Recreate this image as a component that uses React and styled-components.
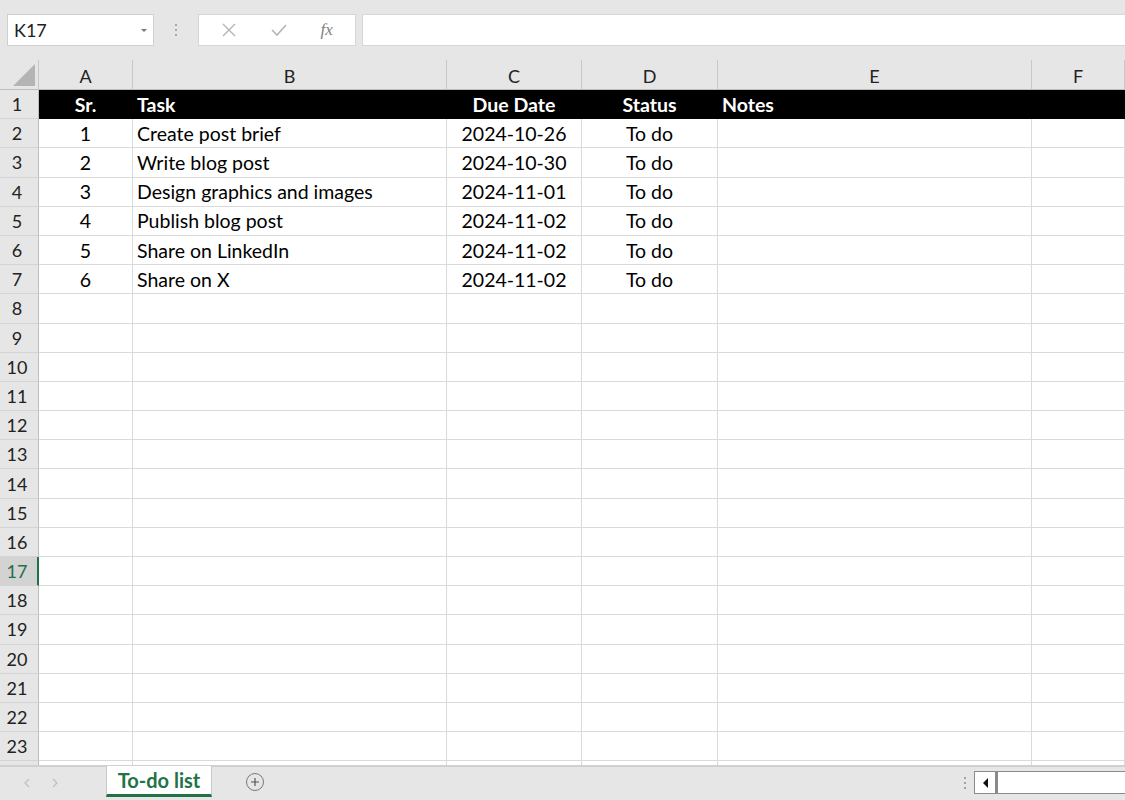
import React from 'react'
import styled, { createGlobalStyle } from 'styled-components'

const GlobalStyle = createGlobalStyle`
  html, body {
    margin: 0;
    padding: 0;
    background: #ffffff;
    overflow: hidden;
  }
  body {
    font-family: "Lato", "Noto Sans", sans-serif;
  }
`;

const Page = styled.div`
  width: 1125px;
  height: 800px;
  display: flex;
  flex-direction: column;
  overflow: hidden;
  background: #ffffff;
`;

const FormulaBar = styled.div`
  height: 60px;
  flex: none;
  background: #e6e6e6;
  display: flex;
  align-items: flex-start;
  padding: 14px 0 0 7px;
  box-sizing: border-box;
`;

const NameBox = styled.div`
  width: 147px;
  height: 32px;
  box-sizing: border-box;
  background: #fff;
  border: 1px solid #d0d0d0;
  display: flex;
  align-items: center;
  justify-content: space-between;
  padding: 0 6px 0 6px;
  font-size: 18px;
  color: #222;
`;

const Caret = styled.span`
  width: 0;
  height: 0;
  border-left: 3px solid transparent;
  border-right: 3px solid transparent;
  border-top: 3px solid #777;
`;

const Grip = styled.div`
  width: 44px;
  height: 32px;
  display: flex;
  flex-direction: column;
  align-items: center;
  justify-content: center;
  gap: 3px;
  span {
    width: 2px;
    height: 2px;
    background: #a8a8a8;
  }
`;

const FxButtons = styled.div`
  width: 158px;
  height: 32px;
  box-sizing: border-box;
  background: #fff;
  border: 1px solid #d6d6d6;
  display: flex;
  align-items: center;
  justify-content: space-around;
  padding: 0 6px;
`;

const Fx = styled.span`
  font-family: "Liberation Serif", serif;
  font-style: italic;
  font-size: 17px;
  color: #808080;
`;

const FormulaInput = styled.div`
  flex: 1;
  height: 32px;
  margin-left: 6px;
  background: #fff;
  border: 1px solid #d6d6d6;
  border-right: none;
  box-sizing: border-box;
`;

const Sheet = styled.div`
  flex: 1;
  overflow: hidden;
  display: grid;
  grid-template-columns: 39px 94px 314px 135px 136px 314px 1fr;
  grid-template-rows: 30px;
  grid-auto-rows: 29.2px;
  align-content: start;
`;

const Corner = styled.div`
  background: #e6e6e6;
  border-right: 1px solid #c8c8c8;
  border-bottom: 1px solid #bdbdbd;
  position: relative;
  overflow: hidden;
  &::after {
    content: '';
    position: absolute;
    right: 3px;
    bottom: 3px;
    border-left: 22px solid transparent;
    border-bottom: 22px solid #b4b4b4;
  }
`;

const ColHead = styled.div`
  background: #e6e6e6;
  border-right: 1px solid #c8c8c8;
  border-bottom: 1px solid #bdbdbd;
  display: flex;
  align-items: center;
  justify-content: center;
  font-size: 18px;
  color: #222;
  box-sizing: border-box;
  padding-top: 2px;
`;

const RowHead = styled.div`
  background: ${p => (p.$selected ? '#d3d3d3' : '#e6e6e6')};
  color: ${p => (p.$selected ? '#217346' : '#222')};
  border-right: ${p => (p.$selected ? '2px solid #217346' : '1px solid #bdbdbd')};
  border-bottom: 1px solid #d4d4d4;
  display: flex;
  align-items: center;
  justify-content: center;
  font-size: 18px;
  box-sizing: border-box;
  padding-right: ${p => (p.$selected ? '3px' : '4px')};
`;

const Cell = styled.div`
  box-sizing: border-box;
  border-right: 1px solid ${p => (p.$dark ? '#000' : '#dadada')};
  border-bottom: 1px solid ${p => (p.$dark ? '#000' : '#dadada')};
  background: ${p => (p.$dark ? '#000' : '#fff')};
  color: ${p => (p.$dark ? '#fff' : '#000')};
  font-weight: ${p => (p.$dark ? 700 : 400)};
  font-size: 19.5px;
  display: flex;
  align-items: center;
  justify-content: ${p => (p.$align === 'center' ? 'center' : 'flex-start')};
  padding: 0 4px;
  white-space: nowrap;
  overflow: hidden;
`;

const BottomBar = styled.div`
  height: 35px;
  flex: none;
  background: #e6e6e6;
  border-top: 2px solid #d0d0d0;
  box-sizing: border-box;
  display: flex;
  align-items: flex-start;
`;

const NavArrows = styled.div`
  width: 106px;
  height: 31px;
  display: flex;
  align-items: center;
  gap: 22px;
  padding-left: 24px;
  box-sizing: border-box;
`;

const Tab = styled.div`
  width: 106px;
  height: 31px;
  background: #fff;
  border-left: 1px solid #c8c8c8;
  border-right: 1px solid #c8c8c8;
  border-bottom: 3px solid #217346;
  box-sizing: border-box;
  margin-top: -1px;
  display: flex;
  align-items: center;
  justify-content: center;
  color: #217346;
  font-weight: 700;
  font-size: 20px;
`;

const AddSheet = styled.div`
  width: 18px;
  height: 18px;
  margin: 6px 0 0 34px;
  border: 1px solid #7a7a7a;
  border-radius: 50%;
  box-sizing: border-box;
  display: flex;
  align-items: center;
  justify-content: center;
`;

const Spacer = styled.div`
  flex: 1;
`;

const ScrollDots = styled.div`
  width: 18px;
  height: 31px;
  display: flex;
  flex-direction: column;
  align-items: center;
  justify-content: center;
  gap: 3px;
  span {
    width: 2px;
    height: 2px;
    background: #a0a0a0;
  }
`;

const HScroll = styled.div`
  width: 151px;
  height: 23px;
  margin: 4px 0 0 0;
  box-sizing: border-box;
  border: 1px solid #8a8a8a;
  border-right: none;
  background: #fff;
  display: flex;
`;

const ScrollBtn = styled.div`
  width: 23px;
  height: 100%;
  border-right: 3px solid #8a8a8a;
  box-sizing: border-box;
  display: flex;
  align-items: center;
  justify-content: center;
  &::before {
    content: '';
    border-top: 5px solid transparent;
    border-bottom: 5px solid transparent;
    border-right: 5px solid #111;
  }
`;

const columns = ['A', 'B', 'C', 'D', 'E', 'F'];

const tasks = [
  { sr: 1, task: 'Create post brief', due: '2024-10-26', status: 'To do' },
  { sr: 2, task: 'Write blog post', due: '2024-10-30', status: 'To do' },
  { sr: 3, task: 'Design graphics and images', due: '2024-11-01', status: 'To do' },
  { sr: 4, task: 'Publish blog post', due: '2024-11-02', status: 'To do' },
  { sr: 5, task: 'Share on LinkedIn', due: '2024-11-02', status: 'To do' },
  { sr: 6, task: 'Share on X', due: '2024-11-02', status: 'To do' },
];

const aligns = ['center', 'left', 'center', 'center', 'left', 'left'];

function buildRow(index) {
  if (index === 0) return ['Sr.', 'Task', 'Due Date', 'Status', 'Notes', ''];
  const t = tasks[index - 1];
  if (!t) return ['', '', '', '', '', ''];
  return [t.sr, t.task, t.due, t.status, '', ''];
}

export default function App() {
  const rows = Array.from({ length: 24 }, (_, i) => i);

  return (
    <Page>
      <GlobalStyle />
      <FormulaBar>
        <NameBox>
          K17
          <Caret />
        </NameBox>
        <Grip>
          <span />
          <span />
          <span />
        </Grip>
        <FxButtons>
          <svg width="16" height="16" viewBox="0 0 16 16">
            <path d="M2 2 L14 14 M14 2 L2 14" stroke="#b4b4b4" strokeWidth="1.4" fill="none" />
          </svg>
          <svg width="18" height="16" viewBox="0 0 18 16">
            <path d="M2 8 L7 13 L16 3" stroke="#b4b4b4" strokeWidth="1.6" fill="none" />
          </svg>
          <Fx>fx</Fx>
        </FxButtons>
        <FormulaInput />
      </FormulaBar>

      <Sheet>
        <Corner />
        {columns.map(c => (
          <ColHead key={c}>{c}</ColHead>
        ))}
        {rows.map(r => (
          <React.Fragment key={r}>
            <RowHead $selected={r + 1 === 17}>{r < 23 ? r + 1 : ''}</RowHead>
            {buildRow(r).map((v, i) => (
              <Cell key={i} $dark={r === 0} $align={aligns[i]}>
                {v}
              </Cell>
            ))}
          </React.Fragment>
        ))}
      </Sheet>

      <BottomBar>
        <NavArrows>
          <svg width="6" height="10" viewBox="0 0 6 10">
            <path d="M5 1 L1 5 L5 9" stroke="#c0c0c0" strokeWidth="1.3" fill="none" />
          </svg>
          <svg width="6" height="10" viewBox="0 0 6 10">
            <path d="M1 1 L5 5 L1 9" stroke="#c0c0c0" strokeWidth="1.3" fill="none" />
          </svg>
        </NavArrows>
        <Tab>To-do list</Tab>
        <AddSheet>
          <svg width="10" height="10" viewBox="0 0 10 10">
            <path d="M5 1 V9 M1 5 H9" stroke="#555" strokeWidth="1.2" />
          </svg>
        </AddSheet>
        <Spacer />
        <ScrollDots>
          <span />
          <span />
          <span />
        </ScrollDots>
        <HScroll>
          <ScrollBtn />
        </HScroll>
      </BottomBar>
    </Page>
  );
}
